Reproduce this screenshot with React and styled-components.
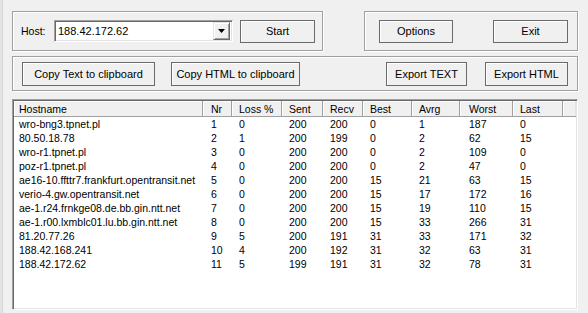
import styled, { createGlobalStyle } from "styled-components";

const GlobalStyle = createGlobalStyle`
  html, body {
    margin: 0;
    padding: 0;
    background: #f0f0f0;
  }
  body {
    font-family: "Liberation Sans", Arial, sans-serif;
    font-size: 10.5px;
    color: #000;
  }
`;

const columns = [
  { key: "host", label: "Hostname", width: 189, pad: 5 },
  { key: "nr", label: "Nr", width: 29, pad: 8 },
  { key: "loss", label: "Loss %", width: 50 },
  { key: "sent", label: "Sent", width: 41 },
  { key: "recv", label: "Recv", width: 40 },
  { key: "best", label: "Best", width: 49 },
  { key: "avrg", label: "Avrg", width: 48 },
  { key: "worst", label: "Worst", width: 53, pad: 9 },
  { key: "last", label: "Last", width: 50 },
];

const hops = [
  ["wro-bng3.tpnet.pl", 1, 0, 200, 200, 0, 1, 187, 0],
  ["80.50.18.78", 2, 1, 200, 199, 0, 2, 62, 15],
  ["wro-r1.tpnet.pl", 3, 0, 200, 200, 0, 2, 109, 0],
  ["poz-r1.tpnet.pl", 4, 0, 200, 200, 0, 2, 47, 0],
  ["ae16-10.ffttr7.frankfurt.opentransit.net", 5, 0, 200, 200, 15, 21, 63, 15],
  ["verio-4.gw.opentransit.net", 6, 0, 200, 200, 15, 17, 172, 16],
  ["ae-1.r24.frnkge08.de.bb.gin.ntt.net", 7, 0, 200, 200, 15, 19, 110, 15],
  ["ae-1.r00.lxmblc01.lu.bb.gin.ntt.net", 8, 0, 200, 200, 15, 33, 266, 31],
  ["81.20.77.26", 9, 5, 200, 191, 31, 33, 171, 32],
  ["188.42.168.241", 10, 4, 200, 192, 31, 32, 63, 31],
  ["188.42.172.62", 11, 5, 199, 191, 31, 32, 78, 31],
];

const gridTemplate = columns.map((c) => `${c.width}px`).join(" ") + " 1fr";

export default function App() {
  return (
    <>
      <GlobalStyle />
      <Page>
        <Edge />
        <Window>
          <TopRow>
            <HostGroup>
              <Label>Host:</Label>
              <Combo>
                <ComboText>188.42.172.62</ComboText>
                <DropButton>
                  <svg width="7" height="4" viewBox="0 0 7 4">
                    <path d="M0 0h7L3.5 4z" fill="#000" />
                  </svg>
                </DropButton>
              </Combo>
              <Button $w={75} $h={23} $ml={7}>Start</Button>
            </HostGroup>
            <ActionGroup>
              <Button $w={74} $h={23}>Options</Button>
              <Button $w={75} $h={23} $ml={40}>Exit</Button>
            </ActionGroup>
          </TopRow>

          <ToolGroup>
            <Button $w={133} $h={24}>Copy Text to clipboard</Button>
            <Button $w={129} $h={24} $ml={16}>Copy HTML to clipboard</Button>
            <Spacer />
            <Button $w={81} $h={24}>Export TEXT</Button>
            <Button $w={83} $h={24} $ml={18}>Export HTML</Button>
          </ToolGroup>

          <ListView>
            <HeaderRow>
              {columns.map((c) => (
                <HeaderCell key={c.key} $pad={c.pad}>{c.label}</HeaderCell>
              ))}
              <HeaderCell $last />
            </HeaderRow>
            {hops.map((row) => (
              <Row key={row[1]}>
                {row.map((v, i) => (
                  <Cell key={columns[i].key} $pad={columns[i].pad}>{v}</Cell>
                ))}
                <Cell />
              </Row>
            ))}
          </ListView>
        </Window>
      </Page>
    </>
  );
}

const Page = styled.div`
  display: flex;
  width: 588px;
  height: 313px;
  overflow: hidden;
  background: #f0f0f0;
`;

const Edge = styled.div`
  width: 3px;
  flex: none;
  background: #e3e3e3;
  border-right: 1px solid #d6d6d6;
  box-sizing: border-box;
`;

const Window = styled.div`
  display: flex;
  flex-direction: column;
  padding: 11px 0 0 9px;
  width: 566px;
`;

const Etched = styled.div`
  box-sizing: border-box;
  border: 1px solid #a0a0a0;
  box-shadow: inset 1px 1px 0 #fff, 1px 1px 0 #fff;
  display: flex;
  align-items: center;
`;

const TopRow = styled.div`
  display: flex;
  justify-content: space-between;
  height: 40px;
`;

const HostGroup = styled(Etched)`
  width: 311px;
  padding-left: 8px;
`;

const ActionGroup = styled(Etched)`
  width: 214px;
  padding-left: 14px;
`;

const ToolGroup = styled(Etched)`
  margin-top: 5px;
  height: 35px;
  padding: 0 9px;
`;

const Spacer = styled.div`
  flex: 1;
`;

const Label = styled.span`
  width: 26px;
`;

const Combo = styled.div`
  box-sizing: border-box;
  margin-left: 7px;
  width: 179px;
  height: 22px;
  display: flex;
  align-items: center;
  background: #fff;
  border: 1px solid;
  border-color: #a0a0a0 #fff #fff #a0a0a0;
  box-shadow: inset 1px 1px 0 #696969, inset -1px -1px 0 #e3e3e3;
  padding: 2px;
  font-size: 11px;
`;

const ComboText = styled.span`
  flex: 1;
  padding-left: 1px;
`;

const DropButton = styled.div`
  box-sizing: border-box;
  width: 17px;
  height: 18px;
  display: flex;
  align-items: center;
  justify-content: center;
  background: #f0f0f0;
  border: 1px solid;
  border-color: #e3e3e3 #696969 #696969 #e3e3e3;
  box-shadow: inset 1px 1px 0 #fff, inset -1px -1px 0 #a0a0a0;
`;

const Button = styled.div`
  box-sizing: border-box;
  flex: none;
  width: ${({ $w }) => $w}px;
  height: ${({ $h }) => $h}px;
  margin-left: ${({ $ml }) => $ml || 0}px;
  display: flex;
  align-items: center;
  justify-content: center;
  background: #f0f0f0;
  border: 1px solid #6a6a6a;
  box-shadow: inset 1px 1px 0 #fff;
  white-space: nowrap;
  font-size: 11px;
`;

const ListView = styled.div`
  box-sizing: border-box;
  margin-top: 8px;
  width: 566px;
  height: 211px;
  background: #fff;
  border: 1px solid;
  border-color: #a0a0a0 #fff #fff #a0a0a0;
  box-shadow: inset 1px 1px 0 #696969, inset -1px -1px 0 #e3e3e3;
  padding: 1px;
  overflow: hidden;
`;

const HeaderRow = styled.div`
  display: grid;
  grid-template-columns: ${gridTemplate};
  height: 16px;
  background: #f0f0f0;
  border-bottom: 1px solid #a0a0a0;
  box-sizing: border-box;
`;

const HeaderCell = styled.div`
  display: flex;
  align-items: center;
  padding-left: ${({ $pad }) => ($pad != null ? $pad : 7)}px;
  border-right: 1px solid ${({ $last }) => ($last ? "#e3e3e3" : "#a0a0a0")};
  box-shadow: inset 1px 1px 0 #fff;
  white-space: nowrap;
  overflow: hidden;
`;

const Row = styled.div`
  display: grid;
  grid-template-columns: ${gridTemplate};
  height: 14px;
  line-height: 14px;
`;

const Cell = styled.div`
  padding-left: ${({ $pad }) => ($pad != null ? $pad : 7)}px;
  white-space: nowrap;
  overflow: hidden;
`;
